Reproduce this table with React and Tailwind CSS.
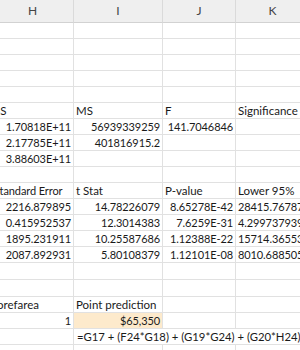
const cols = ['H', 'I', 'J', 'K']

// each row: [H, I, J, K] cells; a cell is null or { t, r (right aligned), s (small) }
const L = (t) => ({ t })
const N = (t) => ({ t, s: true })
const R = (t) => ({ t, r: true, s: true })

const rows = [
  [null, null, null, null],
  [null, null, null, null],
  [null, null, null, null],
  [null, null, null, null],
  [null, null, null, null],
  [L('SS'), L('MS'), L('F'), L('Significance F')],
  [R('1.70818E+11'), R('56939339259'), R('141.7046846'), null],
  [R('2.17785E+11'), R('401816915.2'), null, null],
  [R('3.88603E+11'), null, null, null],
  [null, null, null, null],
  [N('Standard Error'), L('t Stat'), L('P-value'), L('Lower 95%')],
  [R('2216.879895'), R('14.78226079'), R('8.65278E-42'), N('28415.76787')],
  [R('0.415952537'), R('12.3014383'), R('7.6259E-31'), N('4.299737939')],
  [R('1895.231911'), R('10.25587686'), R('1.12388E-22'), N('15714.36553')],
  [R('2087.892931'), R('5.80108379'), R('1.12101E-08'), N('8010.688505')],
]

function Cell({ c, extra = '' }) {
  return (
    <div
      className={`h-4 overflow-hidden whitespace-nowrap border-b border-r border-[#e1e1e1] px-[2px] leading-[16px] text-[#1a1a1a] ${
        c && c.s ? 'text-[11px] tracking-[-0.1px]' : 'text-[11.5px]'
      } ${c && c.r ? 'text-right' : 'text-left'} ${extra}`}
    >
      {c ? c.t : ''}
    </div>
  )
}

export default function App() {
  return (
    <div className="h-[350px] w-[300px] overflow-hidden bg-white font-['Lato',sans-serif]">
      <div className="ml-[-8px] grid w-[318px] grid-cols-[82px_89px_73px_74px]">
        {cols.map((c) => (
          <div
            key={c}
            className="flex h-[23px] items-center justify-center border-b border-r border-b-[#d2d2d2] border-r-[#dadada] bg-[#efefef] text-[12px] text-[#444]"
          >
            {c}
          </div>
        ))}
        {rows.map((row, i) =>
          row.map((c, j) => <Cell key={`${i}-${j}`} c={c} />)
        )}
        {/* two empty rows, slightly taller */}
        {cols.map((c) => (
          <Cell key={`e1-${c}`} c={null} extra="h-[17px]" />
        ))}
        {cols.map((c) => (
          <Cell key={`e2-${c}`} c={null} extra="h-[17px]" />
        ))}
        <div className="h-4 overflow-hidden whitespace-nowrap border-b border-r border-[#e1e1e1] pl-[5px] text-[11.5px] leading-[16px] text-[#1a1a1a]">
          orefarea
        </div>
        <Cell c={L('Point prediction')} extra="overflow-visible" />
        <Cell c={null} />
        <Cell c={null} />
        <Cell c={R('1')} />
        <Cell c={R('$65,350')} extra="bg-[#fdeacc]" />
        <Cell c={null} />
        <Cell c={null} />
        <Cell c={null} />
        <div className="col-span-3 h-4 whitespace-nowrap border-b border-r border-[#e1e1e1] px-[3px] text-[11.3px] leading-[16px] text-[#1a1a1a]">
          =G17 + (F24*G18) + (G19*G24) + (G20*H24)
        </div>
        {cols.map((c) => (
          <Cell key={`e3-${c}`} c={null} />
        ))}
      </div>
    </div>
  )
}
